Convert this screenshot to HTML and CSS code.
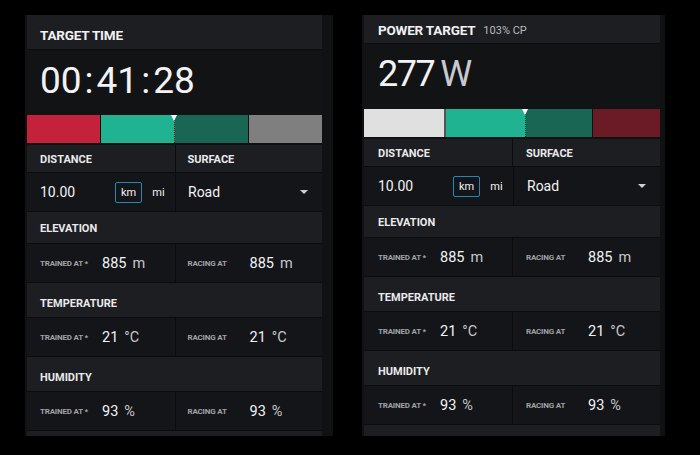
FILE: index.html
```html
<!DOCTYPE html>
<html lang="en">
<head>
<meta charset="UTF-8">
<title>Race Targets</title>
<link rel="stylesheet" href="styles.css">
</head>
<body>

<div class="panel panel-time">
  <div class="panel-head"><span class="title">TARGET TIME</span></div>
  <div class="big">00<span class="colon">:</span>41<span class="colon">:</span>28</div>
  <div class="zones">
    <div class="zone red"></div>
    <div class="zone teal"></div>
    <div class="zone dark"></div>
    <div class="zone grey"></div>
    <div class="marker" style="left: 147px"></div>
  </div>

  <div class="row head two">
    <div class="cell">DISTANCE</div>
    <div class="cell">SURFACE</div>
  </div>
  <div class="row vals two">
    <div class="cell">
      <span class="dist">10.00</span>
      <span class="unit-btn active">km</span>
      <span class="unit-btn">mi</span>
    </div>
    <div class="cell">
      <span class="select">Road</span>
      <span class="caret"></span>
    </div>
  </div>

  <div class="row head elev"><div class="cell">ELEVATION</div></div>
  <div class="row vals two">
    <div class="cell"><span class="lbl">TRAINED AT *</span><span class="num">885</span><span class="unit">m</span></div>
    <div class="cell"><span class="lbl">RACING AT</span><span class="num">885</span><span class="unit">m</span></div>
  </div>

  <div class="row head"><div class="cell">TEMPERATURE</div></div>
  <div class="row vals two">
    <div class="cell"><span class="lbl">TRAINED AT *</span><span class="num">21</span><span class="unit">°C</span></div>
    <div class="cell"><span class="lbl">RACING AT</span><span class="num">21</span><span class="unit">°C</span></div>
  </div>

  <div class="row head"><div class="cell">HUMIDITY</div></div>
  <div class="row vals two">
    <div class="cell"><span class="lbl">TRAINED AT *</span><span class="num">93</span><span class="unit">%</span></div>
    <div class="cell"><span class="lbl">RACING AT</span><span class="num">93</span><span class="unit">%</span></div>
  </div>
  <div class="row head"></div>
</div>

<div class="panel panel-power">
  <div class="panel-head"><span class="title">POWER TARGET</span><span class="sub">103% CP</span></div>
  <div class="big"><span class="watts">277</span><span class="watt">W</span></div>
  <div class="zones">
    <div class="zone light wide"></div>
    <div class="zone teal wide"></div>
    <div class="zone dark"></div>
    <div class="zone wine"></div>
    <div class="marker" style="left: 161px"></div>
  </div>

  <div class="row head two">
    <div class="cell">DISTANCE</div>
    <div class="cell">SURFACE</div>
  </div>
  <div class="row vals two">
    <div class="cell">
      <span class="dist">10.00</span>
      <span class="unit-btn active">km</span>
      <span class="unit-btn">mi</span>
    </div>
    <div class="cell">
      <span class="select">Road</span>
      <span class="caret"></span>
    </div>
  </div>

  <div class="row head elev"><div class="cell">ELEVATION</div></div>
  <div class="row vals two">
    <div class="cell"><span class="lbl">TRAINED AT *</span><span class="num">885</span><span class="unit">m</span></div>
    <div class="cell"><span class="lbl">RACING AT</span><span class="num">885</span><span class="unit">m</span></div>
  </div>

  <div class="row head"><div class="cell">TEMPERATURE</div></div>
  <div class="row vals two">
    <div class="cell"><span class="lbl">TRAINED AT *</span><span class="num">21</span><span class="unit">°C</span></div>
    <div class="cell"><span class="lbl">RACING AT</span><span class="num">21</span><span class="unit">°C</span></div>
  </div>

  <div class="row head"><div class="cell">HUMIDITY</div></div>
  <div class="row vals two">
    <div class="cell"><span class="lbl">TRAINED AT *</span><span class="num">93</span><span class="unit">%</span></div>
    <div class="cell"><span class="lbl">RACING AT</span><span class="num">93</span><span class="unit">%</span></div>
  </div>
  <div class="row head"></div>
</div>

</body>
</html>
```

FILE: styles.css
```css
body {
  background-color: #000;
  font-family: Roboto, "Liberation Sans", sans-serif;
  color: #f2f2f4;
  margin: 0;
  padding: 15px 0 0 25px;
  display: flex;
  align-items: flex-start;
  gap: 29px;
}
.panel {
  background-color: #101113;
  height: 421px;
  overflow: hidden;
  padding-left: 2px;
  box-sizing: border-box;
}
.panel-time {
  width: 308px;
  padding-right: 11px;
}
.panel-power {
  width: 303px;
  padding-right: 5px;
}
.panel-head {
  background-color: #1d1e21;
  display: flex;
  align-items: center;
  padding-left: 13px;
  box-sizing: border-box;
  border-bottom: 1px solid #0b0c0d;
}
.panel-time .panel-head {
  height: 35px;
  padding-top: 5px;
}
.panel-power .panel-head {
  height: 29px;
  padding-left: 14px;
  padding-top: 2px;
}
.title {
  font-size: 13.5px;
  font-weight: 700;
  letter-spacing: -0.2px;
}
.sub {
  font-size: 11px;
  color: #b9babe;
  margin-left: 8px;
  padding-top: 1px;
}
.big {
  height: 65px;
  box-sizing: border-box;
  padding: 12px 0 0 13px;
  background-color: #121315;
  font-size: 37px;
  line-height: 37px;
}
.panel-power .big {
  padding-left: 14px;
  font-size: 36px;
  display: flex;
}
.colon {
  margin: 0 3px;
}
.watts {
  letter-spacing: -1.5px;
}
.watt {
  color: #c9cacf;
  margin-left: 6px;
  letter-spacing: -1px;
}
.zones {
  position: relative;
  height: 28px;
  display: flex;
  margin-bottom: 2px;
}
.zone {
  flex: 1;
}
.zone.wide {
  flex: 1.2;
}
.zone.red { background-color: #c3223a; border-right: 1px solid #111; }
.zone.teal { background-color: #20b391; }
.zone.dark { background-color: #1a6654; border-right: 1px solid #111; }
.zone.grey { background-color: #7f7f7f; }
.zone.light { background-color: #e0e0e0; border-right: 2px solid #555; }
.zone.wine { background-color: #6a1b25; }
.marker {
  position: absolute;
  top: 0;
  bottom: 0;
  width: 0;
  border-left: 1px dotted #06231c;
}
.marker::before {
  content: "";
  position: absolute;
  top: 0;
  left: -4px;
  border-left: 3.5px solid transparent;
  border-right: 3.5px solid transparent;
  border-top: 6px solid #fff;
}
.row {
  box-sizing: border-box;
  border-bottom: 1px solid #0b0c0d;
}
.row.two {
  display: grid;
  grid-template-columns: 1fr 1fr;
}
.row.head {
  background-color: #1d1e21;
  height: 35px;
  font-size: 11px;
  font-weight: 700;
  color: #eaeaec;
}
.row.head .cell {
  display: flex;
  align-items: center;
  height: 100%;
  padding-top: 6px;
  box-sizing: border-box;
}
.row.head.two {
  height: 28px;
}
.row.head.two .cell {
  padding-top: 2px;
}
.row.head.elev {
  height: 32px;
}
.row.head.elev .cell {
  padding-top: 2px;
}
.row.vals {
  background-color: #141518;
  height: 39px;
}
.cell {
  padding-left: 13px;
  display: flex;
  align-items: center;
}
.panel-power .cell {
  padding-left: 14px;
}
.row.vals .cell + .cell,
.row.head.two .cell + .cell {
  border-left: 1px solid #0b0c0d;
  padding-left: 12px;
}
.panel-power .row.vals .cell + .cell,
.panel-power .row.head.two .cell + .cell {
  padding-left: 13px;
}
.dist {
  font-size: 14px;
  width: 75px;
}
.unit-btn {
  font-size: 11px;
  width: 27px;
  height: 21px;
  box-sizing: border-box;
  display: flex;
  align-items: center;
  justify-content: center;
  margin-right: 3px;
  border: 1px solid transparent;
  border-radius: 2px;
}
.unit-btn.active {
  border-color: #2388b0;
}
.select {
  font-size: 14px;
  flex: 1;
}
.caret {
  width: 0;
  height: 0;
  border-left: 4px solid transparent;
  border-right: 4px solid transparent;
  border-top: 4px solid #d0d0d4;
  margin-right: 14px;
}
.lbl {
  font-size: 8px;
  font-weight: 700;
  color: #a0a2a6;
  width: 62px;
  letter-spacing: -0.2px;
}
.num {
  font-size: 14.5px;
  margin-right: 6px;
}
.unit {
  font-size: 14.5px;
  color: #c6c7cb;
}
```
